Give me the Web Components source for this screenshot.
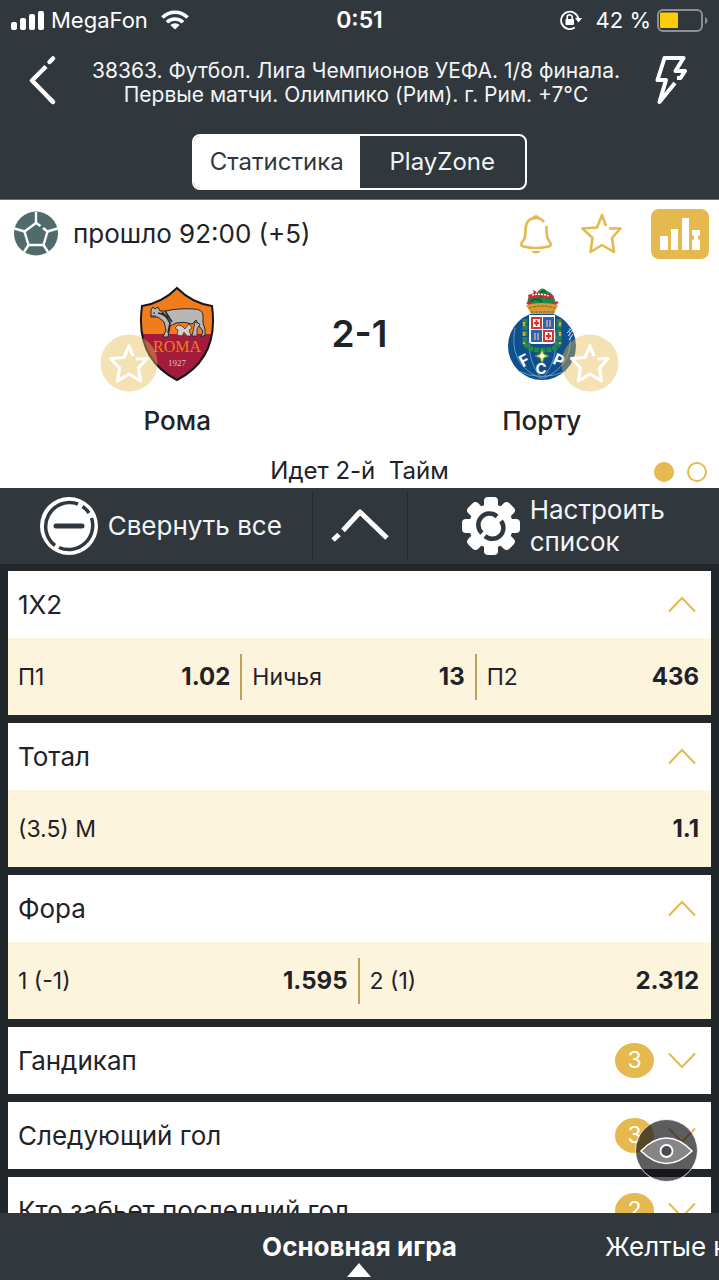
<!DOCTYPE html>
<html lang="ru">
<head>
<meta charset="utf-8">
<meta name="viewport" content="width=device-width, initial-scale=1">
<title>Рома - Порту</title>
<style>
  html {
    height: 100%;
  }
  body {
    --dark: #30383e;
    --darker: #22272b;
    --gold: #e5b94e;
    --cream: #fdf4de;
    --ink: #1f2226;
    margin: 0;
    height: 100%;
    display: flex;
    flex-direction: column;
    overflow: hidden;
    background: var(--darker);
    color: var(--ink);
    font-family: Inter, "Noto Sans", sans-serif;
    font-size: 26px;
    line-height: 32px;
  }
</style>
</head>
<body>
<status-bar carrier="MegaFon" time="0:51" battery="42"></status-bar>
<event-header>
  38363. Футбол. Лига Чемпионов УЕФА. 1/8 финала.<br>Первые матчи. Олимпико (Рим). г. Рим. +7°C
</event-header>
<match-panel clock="прошло 92:00 (+5)" score="2-1">
  <team-badge slot="home" logo="roma" name="Рома"></team-badge>
  <team-badge slot="away" logo="porto" name="Порту" away></team-badge>
  Идет 2-й&nbsp; Тайм
</match-panel>
<list-toolbar></list-toolbar>
<market-list>
  <market-card title="1X2" open>
    <market-odd name="П1" value="1.02"></market-odd>
    <market-odd name="Ничья" value="13"></market-odd>
    <market-odd name="П2" value="436"></market-odd>
  </market-card>
  <market-card title="Тотал" open>
    <market-odd name="(3.5) М" value="1.1"></market-odd>
  </market-card>
  <market-card title="Фора" open>
    <market-odd name="1 (-1)" value="1.595"></market-odd>
    <market-odd name="2 (1)" value="2.312"></market-odd>
  </market-card>
  <market-card title="Гандикап" count="3"></market-card>
  <market-card title="Следующий гол" count="3"></market-card>
  <market-card title="Кто забьет последний гол" count="2"></market-card>
</market-list>
<tab-bar></tab-bar>
<watch-button></watch-button>

<script>
const base = `
  *, *::before, *::after { box-sizing: border-box; }
  button {
    margin: 0;
    padding: 0;
    border: 0;
    background: none;
    color: inherit;
    font: inherit;
    text-align: left;
    cursor: pointer;
  }
`;

const icons = {
  signal: `<svg width="33" height="19" fill="#fff"><rect x="0" y="11" width="6" height="8" rx="2"/><rect x="9" y="7" width="6" height="12" rx="2"/><rect x="18" y="3" width="6" height="16" rx="2"/><rect x="27" y="0" width="6" height="19" rx="2"/></svg>`,
  wifi: `<svg width="28" height="20" viewBox="0 0 28 20" fill="none" stroke="#fff" stroke-width="3.6"><path d="M1.500 7.500A17.500 17.500 0 0 1 26.500 7.500"/><path d="M6 12.300A11.500 11.500 0 0 1 22 12.300"/><path d="M14 19.500L9.300 15A7 7 0 0 1 18.700 15Z" fill="#fff" stroke="none"/></svg>`,
  lock: `<svg width="22" height="20" viewBox="0 0 22 20" fill="none" stroke="#fff" stroke-width="1.8"><path d="M14.800 17.500A8.700 8.700 0 1 1 18.400 9"/><path d="M15 8h7l-3.500 4.500z" fill="#fff" stroke="none"/><rect x="5.500" y="9" width="8.500" height="6" rx="1" fill="#fff" stroke="none"/><path d="M7.200 9.500V7.300a2.500 2.500 0 0 1 5 0V9.500" stroke-width="1.6"/></svg>`,
  battery: `<svg width="51" height="23" viewBox="0 0 51 23"><rect x="1" y="1" width="44" height="21" rx="5" fill="none" stroke="#8b9094" stroke-width="2"/><rect x="3" y="3.500" width="18" height="15.500" rx="1" fill="#fdcb08"/><path d="M48 8q2.500 1 2.500 3.500T48 15z" fill="#8b9094"/></svg>`,
  back: `<svg width="28" height="50" viewBox="0 0 28 50" fill="none" stroke="#fff" stroke-width="4.5"><path d="M20.500 7L24 3.500" stroke-linecap="round"/><path d="M17 11.500L3 25.500L24 47" stroke-linejoin="round"/><path d="M22 45L24 47" stroke-linecap="round"/></svg>`,
  bolt: `<svg width="32" height="50" viewBox="0 0 32 50" fill="none" stroke="#fff" stroke-width="4" stroke-linejoin="round"><path d="M22 23H25.500L30 16H20.500L28.500 3H9.500L2.500 25H11L4.500 47L20 28"/></svg>`,
  ball: `<svg width="46" height="46" viewBox="0 0 46 46"><circle cx="23" cy="22.500" r="22" fill="#4f6b6b"/><g fill="none" stroke="#fff" stroke-width="2.4"><path d="M27.500 15L23 12L11.500 20.500L15.500 34H30.500L34.500 20.500L30 17"/><path d="M23 12V1M11.500 20.500L1.500 17.500M15.500 34L11 41M30.500 34L35 41M34.500 20.500L44.500 17.500"/></g></svg>`,
  bell: `<svg width="34" height="40" viewBox="0 0 34 40" fill="none" stroke="#e5b94e" stroke-width="2.6"><path d="M25 8Q22 4 17 4Q6.500 4 6.500 16C6.500 24 5.500 25 2.500 29Q1.500 32 4.500 32.500Q17 35.500 29.500 32.500Q32.500 32 31.500 29C28.500 25 27.500 24 27.500 12"/><path d="M12.500 4Q17-2 21.500 4z" fill="#e5b94e" stroke="none"/><path d="M12 37h10Q17 42 12 37z" fill="#e5b94e" stroke="none"/></svg>`,
  star: `<svg width="42" height="42" viewBox="-1 1 42 42" fill="none" stroke="#e5b94e" stroke-width="2.6" stroke-linejoin="round"><path d="M27 16.500L38.500 16.500L30 26L32 40L20 33L8.500 40L10.500 26L.5 16.500L15 15.500L20 3L24 14"/></svg>`,
  starDisc: `<svg width="58" height="58" viewBox="0 0 58 58"><circle cx="29" cy="29" r="28.500" fill="#e5b94e" fill-opacity=".42"/><path d="M36 25L47 24.500L38.500 34L40.500 47L29 40L17.500 47L19.500 34L10.500 24.500L24 23.500L29 12L33 22" fill="none" stroke="#fff" stroke-width="3.2" stroke-linejoin="round"/></svg>`,
  chart: `<svg width="58" height="50" viewBox="0 0 58 50"><rect width="58" height="50" rx="8" fill="#e5b94e"/><path fill="#fff" d="M9 27h8v14H9zM20 20h7v21h-7zM31 9h7v32h-7zM41 21h8v5l-2 1v3l2 1v10h-8V31l2-1v-3l-2-1z"/></svg>`,
  collapse: `<svg width="58" height="58" viewBox="0 0 58 58" fill="none"><circle cx="29" cy="29" r="29" fill="#fff"/><g stroke="#30383e" stroke-width="3.5"><path d="M15 48.500A24 24 0 0 1 38 7"/><path d="M42.500 9.500A24 24 0 0 1 49 16"/><path d="M51.500 21A24 24 0 0 1 19 50.500"/><path d="M16 29H42" stroke-width="5" stroke-linecap="round"/></g></svg>`,
  up: `<svg width="60" height="36" viewBox="0 0 60 36" fill="none" stroke="#fff" stroke-width="5"><path d="M3 32L9 26.500"/><path d="M13 22.500L30 4L57 30" stroke-linejoin="round"/></svg>`,
  gear: `<svg width="58" height="58" viewBox="0 0 58 58"><g fill="#fff"><circle cx="29" cy="29" r="22"/><rect x="22" y="0" width="14" height="58" rx="4"/><rect x="22" y="0" width="14" height="58" rx="4" transform="rotate(45 29 29)"/><rect x="22" y="0" width="14" height="58" rx="4" transform="rotate(90 29 29)"/><rect x="22" y="0" width="14" height="58" rx="4" transform="rotate(135 29 29)"/></g><g fill="none" stroke="#30383e" stroke-width="4.5"><path d="M20 36A11 11 0 0 1 35 19.500"/><path d="M39 24A11 11 0 0 1 23 39"/></g></svg>`,
  chevronUp: `<svg width="28" height="17" viewBox="0 0 28 17" fill="none" stroke="#e5b94e" stroke-width="2"><path d="M1 15.500L14 2L27 15.500"/></svg>`,
  chevronDown: `<svg width="28" height="17" viewBox="0 0 28 17" fill="none" stroke="#e5b94e" stroke-width="2"><path d="M1 1.500L14 15L27 1.500"/></svg>`,
  eye: `<svg width="63" height="63" viewBox="0 0 63 63"><circle cx="31.500" cy="31.500" r="31" fill="#101014" fill-opacity=".68" stroke="#fff" stroke-opacity=".85"/><path d="M6 32Q31.500 6 57 32Q31.500 57 6 32Z" fill="#fff" fill-opacity=".25" stroke="#fff" stroke-width="1.6"/><circle cx="31.500" cy="32" r="6" fill="#4a4b4f" stroke="#fff" stroke-width="1.8"/></svg>`,
  roma: `<svg width="76" height="96" viewBox="0 0 76 96">
    <defs><clipPath id="shield"><path d="M38 2Q23 17 3 20C-2 56 11 80 38 94C65 80 78 56 73 20Q53 17 38 2Z"/></clipPath></defs>
    <g clip-path="url(#shield)"><rect width="76" height="49" fill="#f07c1b"/><rect y="48" width="76" height="48" fill="#a31c3c"/></g>
    <path d="M38 2Q23 17 3 20C-2 56 11 80 38 94C65 80 78 56 73 20Q53 17 38 2Z" fill="none" stroke="#17171b" stroke-width="2"/>
    <path d="M12 24L14 21L16 23L19 21L21 25L27 25Q38 22 55 23Q63 23 64 29L64 37L66 43L66 49L62 51L64 45L60 40L57 34L53 38Q45 35 37 37L31 40L29 51H24L27 44L25 36L19 31L12 31Z" fill="#b9b7b6" stroke="#28262a" stroke-width="1"/>
    <path d="M19 27Q27 28 31 37L29 47M23 26L29 32M26 25L33 36" fill="none" stroke="#28262a" stroke-width="1.6"/>
    <path d="M14 27h2M12 30h5" stroke="#28262a"/>
    <path d="M56 36L53 50H58L58 43L61 38Z" fill="#b9b7b6" stroke="#28262a" stroke-width=".8"/>
    <path d="M38 49L39 44L36 42L39 39L43 40L46 43L50 38L53 42L50 44L52 50H48L45 46L43 50Z" fill="#d4cfca" stroke="#4c3030" stroke-width=".8"/>
    <text x="38" y="66" text-anchor="middle" font-family="Liberation Serif, serif" font-size="16" fill="#f07c1b">ROMA</text>
    <text x="38" y="80" text-anchor="middle" font-family="Liberation Serif, serif" font-size="9" fill="#dcc4c4">1927</text>
  </svg>`,
  porto: `<svg width="76" height="96" viewBox="0 0 76 96">
    <circle cx="38" cy="60" r="34" fill="#0e4f8e"/>
    <g fill="none" stroke="#7fa6cb" stroke-width=".8"><path d="M27 40Q20 72 38 93M50 40Q57 72 38 93M11 42Q4 78 36 92M65 42Q72 78 40 92M14 85Q38 96 62 85"/><path d="M63 47l4-4M64 50l5-6M65 54l4-6" stroke="#fff"/></g>
    <path d="M21 33V57Q24 65 38 64Q52 65 55 57V33" fill="none" stroke="#24884a" stroke-width="5" stroke-dasharray="5 1"/>
    <path d="M20 36v22M56 36v22" stroke="#d6a04a" stroke-width="2.5" stroke-dasharray="4 6"/>
    <path d="M25 29H51V55Q51 58 47 58H29Q25 58 25 55Z" fill="#fff"/>
    <rect x="27" y="31" width="11" height="12" fill="#d8342f"/><rect x="39" y="31" width="11" height="12" fill="#2a65ad"/>
    <rect x="27" y="44" width="11" height="12" fill="#2a65ad"/><rect x="39" y="44" width="11" height="12" fill="#d8342f"/>
    <g fill="#fff"><rect x="29" y="33" width="7" height="8"/><rect x="41" y="46" width="7" height="8"/></g>
    <path d="M32.500 34v6M30 37h5M44.500 47v6M42 50h5" stroke="#d8342f" stroke-width="2"/>
    <path d="M43 34v7M46 34v7M31 47v7M34 47v7" stroke="#e9a6a1" stroke-width="1.4"/>
    <path d="M24 19Q21 9 33 7Q38-1 43 5Q52 8 51 19Z" fill="#238443"/>
    <path d="M26 16q6-6 12 0M36 12q5-6 10 1M36 7q3-3 6-1" fill="none" stroke="#0d5c2c" stroke-width="1.5"/>
    <path d="M24 9Q36 4 50 10L48 13Q36 8 25 13ZM22 17l5-2-1 5zM50 15l5 1-4 4zM29 4l4 2-3 3z" fill="#d7263d"/>
    <path d="M28 9Q37 7 45 10" stroke="#fff" stroke-width="1.4" fill="none" stroke-dasharray="2 1"/>
    <path d="M22 19Q38 15 54 19L50 28H27Z" fill="#d79a3a"/><path d="M25 22Q38 18 51 22M27 26H50" stroke="#8a5a1c" fill="none" stroke-dasharray="3 1"/>
    <path d="M38 63L40 68L45 70L40 72L38 78L36 72L31 70L36 68Z" fill="#f5dd55" stroke="#3d9a55"/><circle cx="38" cy="70" r="2" fill="#fff"/>
    <g fill="#fff" font-family="Inter, sans-serif" font-weight="700" font-size="16" text-anchor="middle"><text x="20" y="80" transform="rotate(-28 20 74)">F</text><text x="37" y="88" font-size="15">C</text><text x="55" y="80" transform="rotate(24 55 74)">P</text></g>
  </svg>`,
};

class AppIcon extends HTMLElement {
  constructor() {
    super();
    this._root = this.attachShadow({ mode: 'open' });
  }

  connectedCallback() {
    this._root.innerHTML = `
      <style>
        :host { display: inline-flex; flex: none; vertical-align: top; }
        svg { display: block; }
      </style>
      ${icons[this.getAttribute('name')] || ''}`;
  }
}

class StatusBar extends HTMLElement {
  constructor() {
    super();
    this._root = this.attachShadow({ mode: 'open' });
  }

  connectedCallback() {
    this._root.innerHTML = `
      <style>
        ${base}
        :host {
          flex: none;
          display: grid;
          grid-template-columns: 1fr auto 1fr;
          align-items: center;
          height: 40px;
          padding: 0 11px;
          background: var(--dark);
          color: #fff;
          font-size: 22px;
        }
        div { display: flex; align-items: center; gap: 7px; }
        .right { justify-content: flex-end; gap: 6px; }
        .right span { margin-left: 8px; }
        .wifi { margin-left: 6px; }
        b { font-size: 23px; font-weight: 600; }
      </style>
      <div>
        <app-icon name="signal"></app-icon>
        <span>${this.getAttribute('carrier')}</span>
        <app-icon class="wifi" name="wifi"></app-icon>
      </div>
      <b>${this.getAttribute('time')}</b>
      <div class="right">
        <app-icon name="lock"></app-icon>
        <span>${this.getAttribute('battery')} %</span>
        <app-icon name="battery"></app-icon>
      </div>`;
  }
}

class EventHeader extends HTMLElement {
  constructor() {
    super();
    this._root = this.attachShadow({ mode: 'open' });
    this._root.innerHTML = `
      <style>
        ${base}
        :host {
          box-sizing: border-box;
          flex: none;
          display: block;
          height: 160px;
          background: var(--dark);
          border-bottom: 1px solid #6a7176;
          color: #f3f4f5;
        }
        .bar {
          display: flex;
          align-items: center;
          justify-content: space-between;
          height: 80px;
          padding: 0 32px 0 29px;
        }
        p {
          margin: 0;
          padding-top: 6px;
          font-size: 21px;
          line-height: 24px;
          text-align: center;
          white-space: nowrap;
        }
        .switch {
          display: flex;
          width: 335px;
          height: 56px;
          margin: 14px auto 0;
          border: 2px solid #fff;
          border-radius: 8px;
          overflow: hidden;
          font-size: 24px;
        }
        .switch button { flex: 1; text-align: center; }
        .switch .on { background: #fff; color: var(--dark); }
      </style>
      <div class="bar">
        <button aria-label="Назад"><app-icon name="back"></app-icon></button>
        <p><slot></slot></p>
        <button aria-label="Быстрая ставка"><app-icon name="bolt"></app-icon></button>
      </div>
      <div class="switch">
        <button class="on">Статистика</button>
        <button>PlayZone</button>
      </div>`;
  }
}

class TeamBadge extends HTMLElement {
  constructor() {
    super();
    this._root = this.attachShadow({ mode: 'open' });
  }

  connectedCallback() {
    this._root.innerHTML = `
      <style>
        ${base}
        :host {
          display: flex;
          flex-direction: column;
          align-items: center;
          gap: 23px;
          font-weight: 500;
        }
        .logo { position: relative; display: flex; }
        .logo button { position: absolute; bottom: -10px; left: -39px; }
        :host([away]) .logo button { left: auto; right: -39px; }
      </style>
      <div class="logo">
        <app-icon name="${this.getAttribute('logo')}"></app-icon>
        <button aria-label="В избранное"><app-icon name="starDisc"></app-icon></button>
      </div>
      <span>${this.getAttribute('name')}</span>`;
  }
}

class MatchPanel extends HTMLElement {
  constructor() {
    super();
    this._root = this.attachShadow({ mode: 'open' });
  }

  connectedCallback() {
    this._root.innerHTML = `
      <style>
        ${base}
        :host {
          flex: none;
          display: flex;
          flex-direction: column;
          height: 288px;
          background: #fff;
        }
        .top {
          display: flex;
          align-items: center;
          height: 67px;
          padding: 0 10px 0 13px;
        }
        .top span { flex: 1; padding-left: 14px; }
        .actions { display: flex; align-items: center; gap: 28px; }
        .teams {
          display: grid;
          grid-template-columns: 1fr 130px 1fr;
          padding: 19px 60px 0;
        }
        .score {
          padding-top: 28px;
          text-align: center;
          font-size: 37px;
          line-height: 40px;
          font-weight: 600;
        }
        .period {
          display: grid;
          grid-template-columns: 1fr auto 1fr;
          align-items: center;
          margin-top: auto;
          padding: 0 12px 1px;
          font-size: 24px;
        }
        .text { grid-column: 2; }
        .dots { display: flex; justify-content: flex-end; gap: 13px; padding-top: 2px; }
        i { width: 20px; height: 20px; border: 2px solid var(--gold); border-radius: 50%; }
        i.on { background: var(--gold); }
      </style>
      <div class="top">
        <app-icon name="ball"></app-icon>
        <span>${this.getAttribute('clock')}</span>
        <div class="actions">
          <button aria-label="Уведомления"><app-icon name="bell"></app-icon></button>
          <button aria-label="Избранное"><app-icon name="star"></app-icon></button>
          <button aria-label="Статистика"><app-icon name="chart"></app-icon></button>
        </div>
      </div>
      <div class="teams">
        <slot name="home"></slot>
        <div class="score">${this.getAttribute('score')}</div>
        <slot name="away"></slot>
      </div>
      <div class="period">
        <div class="text"><slot></slot></div>
        <div class="dots"><i class="on"></i><i></i></div>
      </div>`;
  }
}

class ListToolbar extends HTMLElement {
  constructor() {
    super();
    this._root = this.attachShadow({ mode: 'open' });
    this._root.innerHTML = `
      <style>
        ${base}
        :host {
          flex: none;
          display: grid;
          grid-template-columns: 1fr 96px 1fr;
          align-items: center;
          height: 76px;
          background: var(--dark);
          color: #f3f4f5;
        }
        button {
          display: flex;
          align-items: center;
          justify-content: center;
          gap: 10px;
          height: 66px;
        }
        .collapse { padding-left: 10px; }
        .up {
          border: solid #22272b;
          border-width: 0 1px;
        }
      </style>
      <button class="collapse"><app-icon name="collapse"></app-icon><span>Свернуть все</span></button>
      <button class="up" aria-label="Наверх"><app-icon name="up"></app-icon></button>
      <button><app-icon name="gear"></app-icon><span>Настроить<br>список</span></button>`;
  }
}

class MarketList extends HTMLElement {
  constructor() {
    super();
    this._root = this.attachShadow({ mode: 'open' });
    this._root.innerHTML = `
      <style>
        :host {
          flex: 1;
          min-height: 0;
          display: flex;
          flex-direction: column;
          gap: 8px;
          padding: 7px 8px 0;
          overflow: hidden;
        }
      </style>
      <slot></slot>`;
  }
}

class MarketCard extends HTMLElement {
  constructor() {
    super();
    this._root = this.attachShadow({ mode: 'open' });
  }

  connectedCallback() {
    this._render();
    this._root.querySelector('.head').addEventListener('click', this.toggle.bind(this));
  }

  _render() {
    const open = this.hasAttribute('open');
    const count = this.getAttribute('count');
    this._root.innerHTML = `
      <style>
        ${base}
        :host { flex: none; display: block; background: #fff; }
        .head {
          display: flex;
          align-items: center;
          gap: 14px;
          width: 100%;
          height: 67px;
          padding: 0 15px 0 10px;
        }
        .title { flex: 1; }
        .count {
          width: 39px;
          height: 35px;
          border-radius: 50%;
          background: var(--gold);
          color: #fff;
          font-size: 23px;
          line-height: 35px;
          text-align: center;
        }
        .odds {
          display: none;
          align-items: center;
          height: 77px;
          background: var(--cream);
        }
        :host([open]) .odds { display: flex; }
      </style>
      <button class="head" aria-expanded="${open}">
        <span class="title">${this.getAttribute('title')}</span>
        ${count ? `<span class="count">${count}</span>` : ''}
        <app-icon name="${open ? 'chevronUp' : 'chevronDown'}"></app-icon>
      </button>
      <div class="odds"><slot></slot></div>`;
  }

  toggle() {
    this.toggleAttribute('open');
    this.connectedCallback();
  }
}

class MarketOdd extends HTMLElement {
  constructor() {
    super();
    this._root = this.attachShadow({ mode: 'open' });
  }

  connectedCallback() {
    this._root.innerHTML = `
      <style>
        ${base}
        :host {
          flex: 1;
          display: block;
          border-right: 2px solid #c0a15a;
        }
        :host(:last-child) { border-color: transparent; }
        button {
          display: flex;
          align-items: center;
          justify-content: space-between;
          width: 100%;
          height: 46px;
          padding: 0 10px;
          font-size: 23px;
        }
        b { font-size: 24px; font-weight: 700; }
      </style>
      <button><span>${this.getAttribute('name')}</span><b>${this.getAttribute('value')}</b></button>`;
  }
}

class TabBar extends HTMLElement {
  constructor() {
    super();
    this._root = this.attachShadow({ mode: 'open' });
    this._root.innerHTML = `
      <style>
        ${base}
        :host {
          flex: none;
          display: grid;
          grid-template-columns: minmax(0, 1fr) auto minmax(0, 1fr);
          height: 67px;
          overflow: hidden;
          background: var(--dark);
          color: #fff;
        }
        button { white-space: nowrap; }
        .active {
          grid-column: 2;
          display: flex;
          flex-direction: column;
          align-items: center;
          padding-top: 18px;
          font-weight: 700;
        }
        .active::after {
          content: "";
          border: solid transparent;
          border-width: 0 12px 14px;
          border-bottom-color: #fff;
        }
        .next {
          display: flex;
          padding: 18px 0 0 148px;
        }
      </style>
      <button class="active">Основная игра</button>
      <button class="next">Желтые карточки</button>`;
  }
}

class WatchButton extends HTMLElement {
  constructor() {
    super();
    this._root = this.attachShadow({ mode: 'open' });
    this._root.innerHTML = `
      <style>
        ${base}
        :host { position: fixed; right: 21px; bottom: 98px; }
        button { display: block; }
      </style>
      <button aria-label="Смотреть"><app-icon name="eye"></app-icon></button>`;
  }
}

customElements.define('app-icon', AppIcon);
customElements.define('status-bar', StatusBar);
customElements.define('event-header', EventHeader);
customElements.define('team-badge', TeamBadge);
customElements.define('match-panel', MatchPanel);
customElements.define('list-toolbar', ListToolbar);
customElements.define('market-list', MarketList);
customElements.define('market-card', MarketCard);
customElements.define('market-odd', MarketOdd);
customElements.define('tab-bar', TabBar);
customElements.define('watch-button', WatchButton);
</script>
</body>
</html>
